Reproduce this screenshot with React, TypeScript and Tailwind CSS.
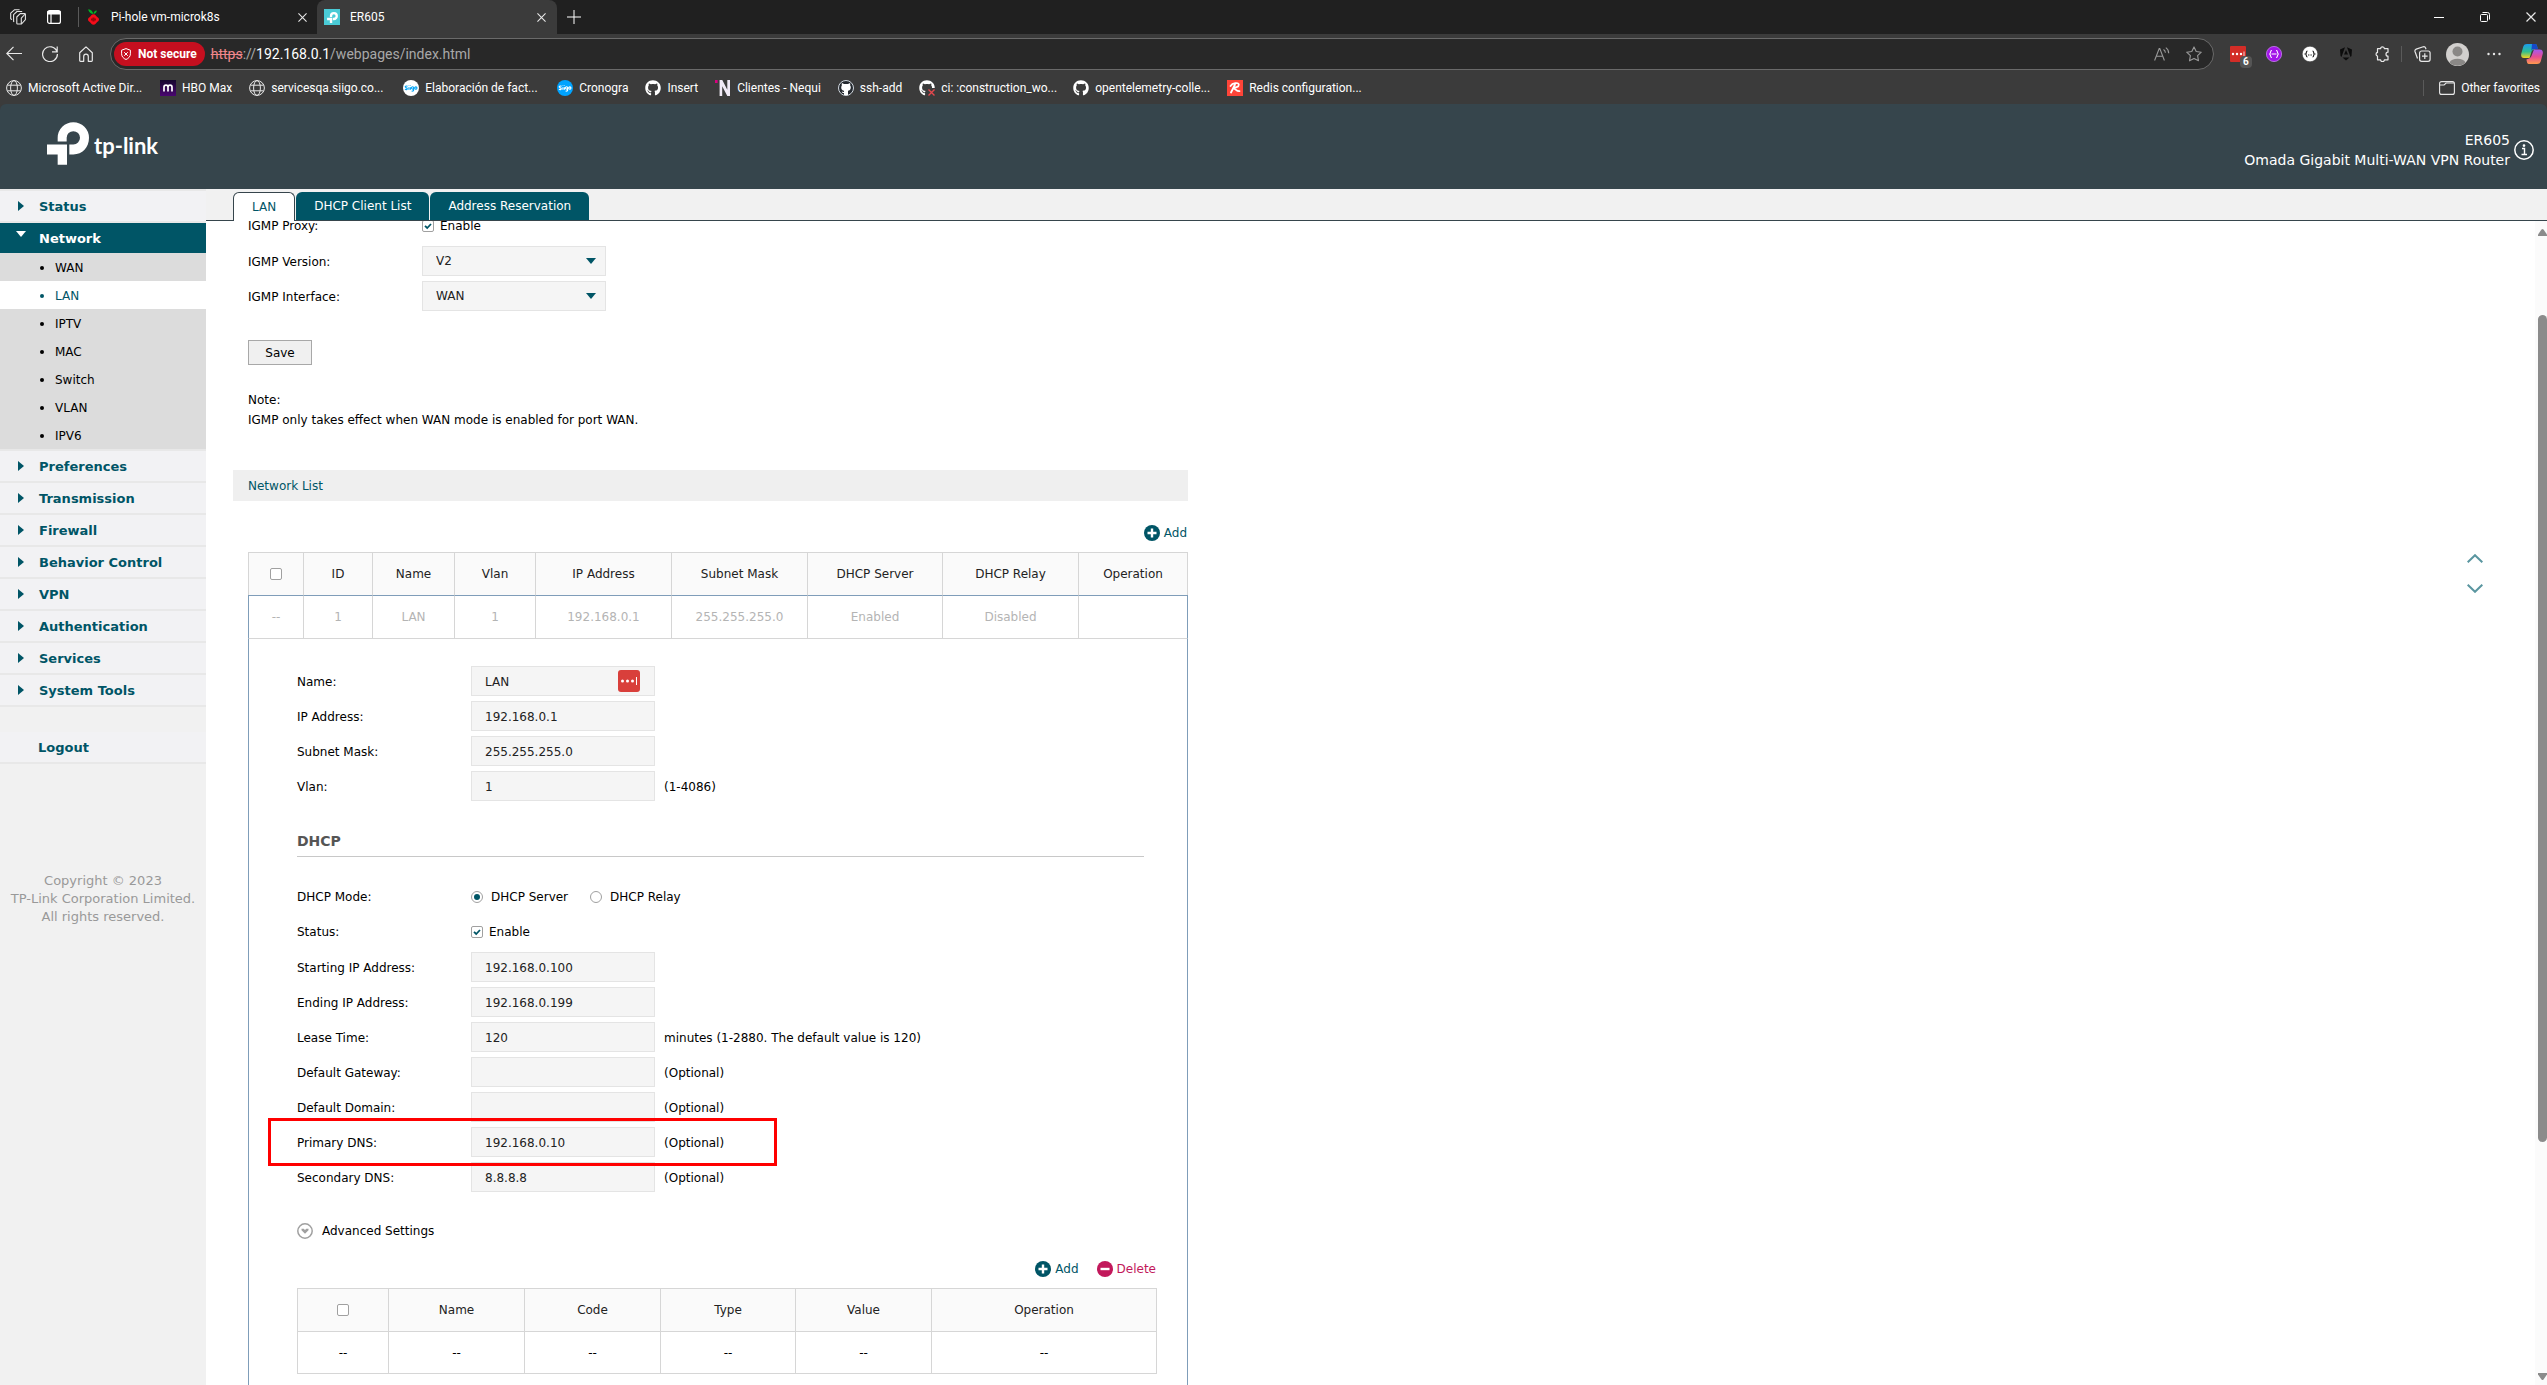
import { ReactNode } from "react";
import clsx from "clsx";
import { FaGithub } from "react-icons/fa";

const menu = ["Preferences", "Transmission", "Firewall", "Behavior Control", "VPN", "Authentication", "Services", "System Tools"];
const networkMenu = ["WAN", "LAN", "IPTV", "MAC", "Switch", "VLAN", "IPV6"];

const bookmarks: { title: string; icon: ReactNode; long?: boolean }[] = [
  { title: "Microsoft Active Dir...", icon: <GlobeIcon />, long: true },
  { title: "HBO Max", icon: <HboIcon /> },
  { title: "servicesqa.siigo.co...", icon: <GlobeIcon />, long: true },
  { title: "Elaboración de fact...", icon: <SiigoIcon bg="#fff" fg="#00a3f5" />, long: true },
  { title: "Cronogra", icon: <SiigoIcon bg="#00a3ff" fg="#fff" /> },
  { title: "Insert", icon: <FaGithub size={16} /> },
  { title: "Clientes - Nequi", icon: <NequiIcon /> },
  { title: "ssh-add", icon: <GithubRoundIcon /> },
  { title: "ci: :construction_wo...", icon: <GithubFailIcon />, long: true },
  { title: "opentelemetry-colle...", icon: <FaGithub size={16} />, long: true },
  { title: "Redis configuration...", icon: <RedisIcon />, long: true },
];

const lanFields = [
  { id: "name", label: "Name:", value: "LAN", hint: "" },
  { id: "ip", label: "IP Address:", value: "192.168.0.1", hint: "" },
  { id: "mask", label: "Subnet Mask:", value: "255.255.255.0", hint: "" },
  { id: "vlan", label: "Vlan:", value: "1", hint: "(1-4086)" },
];

const dhcpFields = [
  { id: "start", label: "Starting IP Address:", value: "192.168.0.100", hint: "" },
  { id: "end", label: "Ending IP Address:", value: "192.168.0.199", hint: "" },
  { id: "lease", label: "Lease Time:", value: "120", hint: "minutes (1-2880. The default value is 120)" },
  { id: "gateway", label: "Default Gateway:", value: "", hint: "(Optional)" },
  { id: "domain", label: "Default Domain:", value: "", hint: "(Optional)" },
  { id: "dns1", label: "Primary DNS:", value: "192.168.0.10", hint: "(Optional)" },
  { id: "dns2", label: "Secondary DNS:", value: "8.8.8.8", hint: "(Optional)" },
];

const networkColumns = ["ID", "Name", "Vlan", "IP Address", "Subnet Mask", "DHCP Server", "DHCP Relay", "Operation"];
const networkRow = ["--", "1", "LAN", "1", "192.168.0.1", "255.255.255.0", "Enabled", "Disabled", ""];
const optionColumns = ["Name", "Code", "Type", "Value", "Operation"];

function GlobeIcon() {
  return (
    <svg width="16" height="16" viewBox="0 0 16 16" fill="none" stroke="#e8e8e8">
      <circle cx="8" cy="8" r="7.4" />
      <ellipse cx="8" cy="8" rx="3.4" ry="7.4" />
      <path d="M1.4 5.2h13.2M1.4 10.8h13.2" />
    </svg>
  );
}

function HboIcon() {
  return (
    <svg width="16" height="16" viewBox="0 0 16 16">
      <defs>
        <linearGradient id="hbo" x1="0" y1="0" x2="0" y2="1">
          <stop offset="0" stopColor="#16082e" />
          <stop offset="1" stopColor="#4a0670" />
        </linearGradient>
      </defs>
      <rect width="16" height="16" fill="url(#hbo)" />
      <path d="M4 11.5V7.2a2 2 0 0 1 4 0v4.3M8 7.2a2 2 0 0 1 4 0v4.3" fill="none" stroke="#fff" strokeWidth="1.7" />
    </svg>
  );
}

function SiigoIcon({ bg, fg }: { bg: string; fg: string }) {
  return (
    <svg width="16" height="16" viewBox="0 0 16 16">
      <circle cx="8" cy="8" r="8" fill={bg} />
      <path
        d="M4.6 6.2c-1.6-.6-2.8.2-2.2 1.1.5.7 1.9.5 1.9 1.5s-1.5 1-2.4.5M5.9 7.2v2.6M7.4 7.2v2.6M10.6 8.4a1.1 1.2 0 1 0-2 0 1.1 1.2 0 0 0 2 0v1.8c0 1-1.4 1.1-2 .7M13.9 8.4a1.1 1.2 0 1 0-2.1 0 1.1 1.2 0 0 0 2.1 0M5.9 5.6v.5M7.4 5.6v.5"
        fill="none"
        stroke={fg}
        strokeWidth="1.1"
      />
    </svg>
  );
}

function NequiIcon() {
  return (
    <svg width="16" height="16" viewBox="0 0 16 16">
      <path d="M0 0h2.6v3H0z" fill="#da0081" />
      <path d="M4.6 16V0h2.7l5 9.8V0H15v16h-2.7L7.2 6.3V16z" fill="#f0eaf6" />
    </svg>
  );
}

function GithubRoundIcon() {
  return (
    <span className="flex size-4 items-center justify-center rounded-full border border-[#d0d7de] bg-[#24292f]">
      <svg width="14" height="14" viewBox="0 0 14 14" fill="#fff">
        <path d="M3 2l2 1h4l2-1c.4 1 .3 1.7.1 2.2.6.7.8 1.5.7 2.5C11.6 8.6 10.4 9.5 9 9.8V14H5v-2c-1.2.2-1.7-.4-2.3-1.5.9.2 1.300.8 2.300.5v-1.200C3.400 9.400 2.300 8.600 2.200 6.700c0-1 .2-1.800.7-2.500C2.700 3.500 2.600 3 3 2z" />
      </svg>
    </span>
  );
}

function GithubFailIcon() {
  return (
    <span className="relative block size-4">
      <FaGithub size={16} />
      <svg className="absolute -right-px -bottom-px" width="9" height="9" viewBox="0 0 9 9">
        <rect width="9" height="9" fill="#3b3b3b" />
        <path d="M1.5 1.5l6 6M7.5 1.5l-6 6" stroke="#e5484d" strokeWidth="1.4" />
      </svg>
    </span>
  );
}

function RedisIcon() {
  return (
    <svg width="16" height="16" viewBox="0 0 16 16">
      <rect width="16" height="16" fill="#ff4438" />
      <path d="M3.5 6c2-3.2 8-4 8.3-1.4C12 7 8 8 5.5 8c3 0 3.5 3.5 7 3.2M8 4.5L4 12.5" fill="none" stroke="#fff" strokeWidth="1.8" strokeLinecap="round" />
    </svg>
  );
}

function TpMark({ width, height }: { width: number; height: number }) {
  return (
    <svg width={width} height={height} viewBox="141 366 126 128" fill="#fff">
      <path d="M173 424V413A47 47 0 0 1 267 413C267 442 247 463 220 463H208V433H220A20 20 0 0 0 240 413A20 20 0 0 0 200 413V424Z" />
      <path d="M141 433H201V494H173V463H141Z" />
    </svg>
  );
}

function CloseIcon({ size = 9 }: { size?: number }) {
  return (
    <svg width={size} height={size} viewBox="0 0 10 10" stroke="#e8e8e8" strokeWidth="1.2">
      <path d="M.5.5l9 9M9.5.5l-9 9" />
    </svg>
  );
}

function TitleBar() {
  return (
    <div className="flex h-[34px] items-center bg-[#202020] text-white">
      <button className="ml-[10px]" aria-label="Workspaces">
        <svg width="16" height="16" viewBox="0 0 16 16" fill="none" stroke="#e4e4e4" strokeWidth="1.1" strokeLinejoin="round">
          <path d="M6.8 8l3.400-3.400h4.400a.8.8 0 0 1 .8.8v5.200L11.500 15H7.600a.8.8 0 0 1-.8-.8z" />
          <path d="M11.300 15V9.200l3.900-4.200M4.200 12.800l-.6-.4V5.600L7 2.500h5.200M2 10.600l-1.300-.8V4.200L4.400.8h5.200" />
        </svg>
      </button>
      <button className="ml-[21px]" aria-label="Tab actions">
        <svg width="14" height="14" viewBox="0 0 14 14" fill="none" stroke="#fff" strokeWidth="1.2">
          <rect x=".6" y=".6" width="12.8" height="12.8" rx="2" />
          <path d="M1 1.500h12v2.500H1z" fill="#fff" />
          <path d="M4 4v9" />
        </svg>
      </button>
      <span className="ml-[17px] h-5 w-px bg-[#5a5a5a]" />
      <div className="flex h-full w-[238px] items-center pr-[10px] pl-[9px]">
        <svg width="11" height="16" viewBox="0 0 11 16">
          <path d="M5.3 5C5 2.500 3 .3.3.2c0 2 2 4.500 5 4.800zM5.600 5c0-2 1.200-3.400 3.200-3.500C8.700 3.300 7.500 4.800 5.600 5z" fill="#00b526" />
          <path d="M5.5 5.200c1.800 0 2.200 1.300 3.200 2.300s2.300 1.400 2.300 3-1.300 2-2.300 3-1.400 2.300-3.200 2.300-2.200-1.300-3.200-2.300S0 12.100 0 10.500s1.300-2 2.300-3 1.400-2.300 3.200-2.300z" fill="#f60d1a" />
          <path d="M3 10.500l5 0M5.500 8.500v4" stroke="#96060c" strokeWidth="2" />
        </svg>
        <span className="ml-3 flex-1 text-xs">Pi-hole vm-microk8s</span>
        <button aria-label="Close tab"><CloseIcon /></button>
      </div>
      <div className="flex h-full w-[240px] items-center rounded-t-lg bg-[#3b3b3b] pr-[11px] pl-[7px]">
        <span className="flex size-4 items-center justify-center bg-[#4acbd6]">
          <TpMark width={11} height={11} />
        </span>
        <span className="ml-[10px] flex-1 text-xs">ER605</span>
        <button aria-label="Close tab"><CloseIcon /></button>
      </div>
      <button className="ml-[10px]" aria-label="New tab">
        <svg width="14" height="14" viewBox="0 0 14 14" stroke="#fff"><path d="M7 0v14M0 7h14" /></svg>
      </button>
      <div className="ml-auto flex items-center gap-9 pr-[11px]">
        <button className="flex size-[10px] items-center" aria-label="Minimize">
          <span className="h-px w-full bg-white" />
        </button>
        <button aria-label="Restore">
          <svg width="10" height="10" viewBox="0 0 10 10" fill="none" stroke="#fff">
            <rect x=".5" y="2.5" width="7" height="7" rx="1" />
            <path d="M2.500.5h5a2 2 0 0 1 2 2v5" />
          </svg>
        </button>
        <button aria-label="Close window"><CloseIcon size={10} /></button>
      </div>
    </div>
  );
}

function Toolbar() {
  return (
    <div className="flex h-10 items-center bg-[#3b3b3b] text-white">
      <button className="ml-[6px]" aria-label="Back">
        <svg width="16" height="16" viewBox="0 0 16 16" fill="none" stroke="#e8e8e8" strokeWidth="1.2">
          <path d="M16 7.500H.8M7.500.8L.8 7.500l6.700 6.700" />
        </svg>
      </button>
      <button className="ml-5" aria-label="Refresh">
        <svg width="16" height="16" viewBox="0 0 16 16" fill="none" stroke="#e8e8e8" strokeWidth="1.2">
          <path d="M14.900 5.500A7.400 7.400 0 1 0 15.400 8M15.200.5v5.300H10" />
        </svg>
      </button>
      <button className="ml-[21px]" aria-label="Home">
        <svg width="14" height="16" viewBox="0 0 14 16" fill="none" stroke="#e8e8e8" strokeWidth="1.2" strokeLinejoin="round">
          <path d="M.7 6.800L7 .9l6.300 5.900v7.700a.8.8 0 0 1-.8.8H9.300v-4.800a2.300 2.300 0 0 0-4.600 0v4.800H1.500a.8.8 0 0 1-.8-.8z" />
        </svg>
      </button>
      <div className="ml-[17px] flex h-8 flex-1 items-center rounded-full border border-[#6a6a6a] bg-[#282828] pr-[11px] pl-[3px]">
        <button className="flex h-6 items-center gap-[7px] rounded-full bg-[#c50f1f] pr-2 pl-[7px] text-xs font-bold">
          <svg width="10" height="12" viewBox="0 0 10 12" fill="none" stroke="#fff">
            <path d="M5 .6l4.400 1.600v3.600c0 2.800-1.900 4.700-4.400 5.700C2.500 10.500.6 8.600.6 5.800V2.200zM3.200 4.200l3.600 3.600M6.800 4.200L3.200 7.800" />
          </svg>
          Not secure
        </button>
        <span className="ml-[6px] flex-1 text-sm text-[#a8a8a8]">
          <span className="text-[#f0868c] line-through">https</span>://<span className="text-white">192.168.0.1</span>/webpages/index.html
        </span>
        <button aria-label="Read aloud">
          <svg width="16" height="14" viewBox="0 0 16 14" fill="none" stroke="#9a9a9a" strokeWidth="1.1">
            <path d="M.6 13.500L5.200 1.500h.6l4.600 12M2.200 9.300h6.600M9.500 2.500c1.200.7 1.800 1.700 1.900 3.200M11.800.6c1.900 1.200 2.900 3.200 2.900 5.600" />
          </svg>
        </button>
        <button className="ml-4" aria-label="Add to favorites">
          <svg width="16" height="16" viewBox="0 0 16 16" fill="none" stroke="#9a9a9a" strokeWidth="1.1" strokeLinejoin="round">
            <path d="M8 .9l2.200 4.600 5.100.7-3.700 3.500.9 5.100L8 12.400l-4.500 2.400.9-5.100L.7 6.200l5.100-.7z" />
          </svg>
        </button>
      </div>
      <div className="ml-4 flex items-center gap-5">
        <button className="relative block size-4" aria-label="Password manager">
          <svg width="16" height="16" viewBox="0 0 16 16">
            <rect width="16" height="16" rx="1" fill="#d32d27" />
            <circle cx="3" cy="8" r="1.2" fill="#fff" />
            <circle cx="7" cy="8" r="1.2" fill="#fff" />
            <circle cx="11" cy="8" r="1.2" fill="#fff" />
            <path d="M14 5.500v5" stroke="#fff" strokeWidth=".8" />
          </svg>
          <span className="absolute top-[10px] left-[10px] rounded-sm bg-[#555] px-[3px] text-[10px] leading-3 font-bold">6</span>
        </button>
        <button aria-label="Extension">
          <svg width="16" height="16" viewBox="0 0 16 16">
            <circle cx="8" cy="8" r="7.6" fill="#a315e8" stroke="#c77df2" strokeWidth=".8" />
            <path d="M6 4.500c-2.500 0-.6 3-2.600 3.500 2 .5.1 3.500 2.600 3.500M10 4.500c2.500 0 .6 3 2.600 3.500-2 .5-.1 3.500-2.600 3.500M5.500 8h5" fill="none" stroke="#fff" strokeWidth="1.1" />
          </svg>
        </button>
        <button aria-label="Extension">
          <svg width="16" height="16" viewBox="0 0 16 16">
            <circle cx="8" cy="8" r="7.8" fill="#fff" stroke="#222" strokeWidth=".5" />
            <path d="M5.500 5c-2 0-.4 2.500-2 3 1.600.5 0 3 2 3M10.500 5c2 0 .4 2.500 2 3-1.600.5 0 3-2 3" fill="none" stroke="#222" strokeWidth="1.2" />
            <path d="M6 9h4" stroke="#222" strokeDasharray="1 .6" />
          </svg>
        </button>
        <button aria-label="Extension">
          <svg width="16" height="14" viewBox="0 0 16 14" fill="#0c0c0c">
            <path d="M2 2.500L7 .3 3.500 10 2.500 9zM14 2.500L9 .3 12.500 10l1-1zM8 3l2 4.500H6zM4.500 10.500h7L8 13.500z" />
          </svg>
        </button>
        <button aria-label="Extensions">
          <svg width="16" height="16" viewBox="0 0 16 16" fill="none" stroke="#e8e8e8" strokeWidth="1.2" strokeLinejoin="round">
            <path d="M3.500 2.700h3.100a1.900 1.900 0 0 1 3.800 0H14v3.500a2 2 0 0 0 0 4v3.600h-3.600a1.900 1.900 0 0 1-3.800 0H3.500v-3.700a1.900 1.900 0 0 1 0-3.700z" />
          </svg>
        </button>
      </div>
      <span className="ml-[11px] h-4 w-px bg-[#5a5a5a]" />
      <button className="ml-3" aria-label="Collections">
        <svg width="17" height="16" viewBox="0 0 17 16" fill="none" stroke="#e8e8e8" strokeWidth="1.2">
          <rect x="5.6" y="5" width="10.5" height="10.3" rx="2" />
          <path d="M10.800 7.300v5.600M8 10.100h5.600M3.500 12.500L1 5.500a2 2 0 0 1 1.200-2.400l7-2.300a2 2 0 0 1 2.400 1.200l.4 1.200" />
        </svg>
      </button>
      <button className="ml-[15px]" aria-label="Profile">
        <svg width="23" height="23" viewBox="0 0 23 23">
          <circle cx="11.5" cy="11.5" r="11.5" fill="#d2d0ce" />
          <circle cx="11.5" cy="8.5" r="5" fill="#8a8886" />
          <path d="M3.500 19.500a8.500 5.500 0 0 1 16 0 11.500 11.500 0 0 1-16 0z" fill="#8a8886" />
        </svg>
      </button>
      <button className="ml-[18px]" aria-label="Settings and more">
        <svg width="14" height="4" viewBox="0 0 14 4" fill="#e8e8e8">
          <circle cx="1.5" cy="2" r="1.2" /><circle cx="7" cy="2" r="1.2" /><circle cx="12.5" cy="2" r="1.2" />
        </svg>
      </button>
      <button className="mr-1 ml-5" aria-label="Copilot">
        <svg width="22" height="20" viewBox="0 0 22 20">
          <defs>
            <linearGradient id="cop1" x1="0" y1="0" x2="0" y2="1">
              <stop offset="0" stopColor="#1b9bf0" />
              <stop offset=".55" stopColor="#2fbf8f" />
              <stop offset="1" stopColor="#f5d422" />
            </linearGradient>
            <linearGradient id="cop2" x1="0" y1="0" x2="0" y2="1">
              <stop offset="0" stopColor="#a45af0" />
              <stop offset=".5" stopColor="#e84c93" />
              <stop offset="1" stopColor="#ff9a4d" />
            </linearGradient>
          </defs>
          <path d="M6 0h8c2 0 2 2 2.600 4.500L13 5.500c-2 .5-2.500 2-3 4L8.500 14H3C.5 14-.3 12 .3 9.500l2-7C2.900.8 4 0 6 0z" fill="url(#cop1)" />
          <path d="M11 0h3c2 0 2.200 2.500 3 5h-4c-1.500 0-2.200.7-2.700 2z" fill="#1649c9" />
          <path d="M16 20H8c-2 0-2-2-2.600-4.500L8 14.500c1.500-.5 2.300-2 3-4L13 5.500h5.500c3 0 3.800 2 3.200 4.500l-2 7.500c-.6 1.700-1.700 2.500-3.700 2.500z" fill="url(#cop2)" />
        </svg>
      </button>
    </div>
  );
}

function BookmarksBar() {
  return (
    <div className="flex h-[30px] items-center bg-[#3b3b3b] pb-[2px] pl-[6px] text-xs text-white">
      {bookmarks.map((b) => (
        <a key={b.title} href="#" className={clsx("flex shrink-0 items-center gap-[6px]", b.long ? "w-[154px]" : "pr-[17px]")}>
          {b.icon}
          <span className="whitespace-nowrap">{b.title}</span>
        </a>
      ))}
      <span className="ml-auto h-4 w-px bg-[#5a5a5a]" />
      <a href="#" className="mr-[7px] ml-[15px] flex items-center gap-[6px]">
        <svg width="16" height="14" viewBox="0 0 16 14" fill="none" stroke="#e8e8e8" strokeWidth="1.1">
          <rect x=".6" y=".6" width="14.8" height="12.8" rx="2" />
          <path d="M.6 4h4.500l2-2H15" />
        </svg>
        Other favorites
      </a>
    </div>
  );
}

function Header() {
  return (
    <header className="flex h-[85px] shrink-0 items-center justify-between rounded-t-md bg-[#36454c] pr-[13px] pl-[47px] text-white">
      <div className="flex items-center gap-[5px] pb-[6px]">
        <TpMark width={42} height={43} />
        <span className="pt-1 font-['Lato',sans-serif] text-[22px] font-bold">tp-link</span>
      </div>
      <div className="flex items-center gap-1 pt-[7px]">
        <p className="text-right text-sm leading-5">
          ER605
          <br />
          Omada Gigabit Multi-WAN VPN Router
        </p>
        <button aria-label="Device information">
          <svg width="20" height="20" viewBox="0 0 20 20" fill="none" stroke="#fff" strokeWidth="1.5">
            <circle cx="10" cy="10" r="9.2" />
            <path d="M8 8.500h2.500v6M7.500 14.500h5.500" strokeWidth="1.4" />
            <circle cx="10" cy="5.6" r=".6" fill="#fff" />
          </svg>
        </button>
      </div>
    </header>
  );
}

function MenuItem({ title }: { title: string }) {
  return (
    <a href="#" className="flex h-8 items-center border-t-2 border-[#e8e8e8] bg-[#f2f2f4] text-[#005566]">
      <svg className="mr-[15px] ml-[18px]" width="6" height="10" viewBox="0 0 6 10" fill="#005566">
        <path d="M0 0l6 5-6 5z" />
      </svg>
      <span className="pt-0.5">{title}</span>
    </a>
  );
}

function Sidebar() {
  return (
    <nav className="w-[206px] shrink-0 bg-[#f1f1f1] text-[13px] font-bold">
      <MenuItem title="Status" />
      <a href="#" className="flex h-8 items-center border-t-2 border-[#e8e8e8] bg-[#005566] text-white">
        <svg className="mr-[13px] mb-2 ml-4" width="10" height="6" viewBox="0 0 10 6" fill="#fff"><path d="M0 0h10L5 6z" /></svg>
        <span className="pt-0.5">Network</span>
      </a>
      <ul className="bg-[#dcdcdc] text-xs font-normal">
        {networkMenu.map((item) => (
          <li key={item}>
            <a href="#" className={clsx("flex h-7 items-center gap-[11px] pt-0.5 pl-10", item === "LAN" ? "bg-white text-[#005566]" : "text-black")}>
              <span className="size-1 rounded-full bg-current" />
              {item}
            </a>
          </li>
        ))}
      </ul>
      {menu.map((item) => (
        <MenuItem key={item} title={item} />
      ))}
      <div className="h-[27px] border-t-2 border-[#e8e8e8]" />
      <a href="#" className="flex h-8 items-center border-b-2 border-[#e8e8e8] bg-[#f2f2f4] pt-0.5 pl-[38px] text-[#005566]">Logout</a>
      <p className="mt-[108px] text-center text-[13px] leading-[18px] font-normal text-[#999]">
        Copyright © 2023
        <br />
        TP-Link Corporation Limited.
        <br />
        All rights reserved.
      </p>
    </nav>
  );
}

function Tabs() {
  return (
    <div role="tablist" className="flex h-8 shrink-0 items-end gap-px border-b border-[#36454c] bg-[#f1f1f1] pl-[27px] text-xs">
      <button role="tab" aria-selected className="-mb-px h-[29px] rounded-t-md border border-b-0 border-[#36454c] bg-white px-[18px] text-[#005566]">LAN</button>
      <button role="tab" className="h-7 rounded-t-md bg-[#005566] px-[18px] text-white">DHCP Client List</button>
      <button role="tab" className="h-7 rounded-t-md bg-[#005566] px-[18px] text-white">Address Reservation</button>
    </div>
  );
}

function Checkbox({ id, checked = false, label }: { id: string; checked?: boolean; label?: string }) {
  return (
    <span className="relative inline-flex size-3">
      <input
        id={id}
        type="checkbox"
        defaultChecked={checked}
        aria-label={label}
        className="peer size-3 appearance-none rounded-xs border border-[#a0a0a0] bg-white"
      />
      <svg className="pointer-events-none absolute inset-0 hidden peer-checked:block" width="12" height="12" viewBox="0 0 12 12">
        <path d="M3 5.800l2.200 2.200L9 4" fill="none" stroke="#005566" strokeWidth="1.8" />
      </svg>
    </span>
  );
}

function Radio({ id, label, checked = false }: { id: string; label: string; checked?: boolean }) {
  return (
    <div className="flex items-center gap-2">
      <input
        id={id}
        name="mode"
        type="radio"
        defaultChecked={checked}
        className="size-3 appearance-none rounded-full border border-[#a0a0a0] bg-white checked:bg-[#005566] checked:bg-clip-content checked:p-[2px]"
      />
      <label htmlFor={id}>{label}</label>
    </div>
  );
}

function SelectRow({ id, label, value }: { id: string; label: string; value: string }) {
  return (
    <div className="flex h-[30px] items-center">
      <label htmlFor={id} className="w-[174px] pt-0.5">{label}</label>
      <div className="relative w-[184px]">
        <select id={id} defaultValue={value} className="h-[30px] w-full appearance-none border border-[#e4e4e4] bg-[#f5f5f5] px-[13px] text-[#222]">
          <option>{value}</option>
        </select>
        <svg className="pointer-events-none absolute top-3 right-[10px]" width="10" height="6" viewBox="0 0 10 6" fill="#005566">
          <path d="M0 0h10L5 6z" />
        </svg>
      </div>
    </div>
  );
}

function Field({ id, label, value, hint }: { id: string; label: string; value: string; hint: string }) {
  return (
    <div className="relative flex h-[30px] items-center">
      <label htmlFor={id} className="w-[174px] pt-0.5">{label}</label>
      <div className="relative">
        <input id={id} defaultValue={value} className="block h-[30px] w-[184px] border border-[#e4e4e4] bg-[#f5f5f5] px-[13px] pt-0.5 text-[#222]" />
        {id === "name" && (
          <svg className="absolute top-1 right-[15px]" width="22" height="22" viewBox="0 0 22 22">
            <rect width="22" height="22" rx="3" fill="#d93f3b" />
            <circle cx="4.5" cy="11" r="1.5" fill="#fff" />
            <circle cx="9.5" cy="11" r="1.5" fill="#fff" />
            <circle cx="14.5" cy="11" r="1.5" fill="#fff" />
            <path d="M18.500 7v8" stroke="#fff" />
          </svg>
        )}
      </div>
      {hint && <span className="ml-[9px] pt-0.5">{hint}</span>}
      {id === "dns1" && <div className="pointer-events-none absolute -top-[9px] -left-[29px] z-10 h-12 w-[509px] border-3 border-[#ff0000]" />}
    </div>
  );
}

function ActionButton({ type }: { type: "Add" | "Delete" }) {
  return (
    <button className={clsx("flex h-5 items-center gap-1", type === "Add" ? "text-[#005566]" : "text-[#c2185b]")}>
      <svg width="16" height="16" viewBox="0 0 16 16">
        <circle cx="8" cy="8" r="8" fill="currentColor" />
        <path d={type === "Add" ? "M8 3.5v9M3.5 8h9" : "M3.5 8h9"} stroke="#fff" strokeWidth="2.4" />
      </svg>
      {type}
    </button>
  );
}

function OptionsTable() {
  return (
    <table className="mt-[9px] w-[860px] table-fixed border-separate border-spacing-0 border-r border-b border-[#d6d6d6] text-center">
      <colgroup>
        <col className="w-[91px]" />
        <col className="w-[136px]" />
        <col className="w-[136px]" />
        <col className="w-[135px]" />
        <col className="w-[136px]" />
        <col />
      </colgroup>
      <thead>
        <tr className="h-[43px] bg-[#fafafa] text-[#222]">
          <th className="border-t border-l border-[#d6d6d6] align-middle"><div className="flex justify-center"><Checkbox id="all-options" label="Select all options" /></div></th>
          {optionColumns.map((c) => (
            <th key={c} className="border-t border-l border-[#d6d6d6] font-normal">{c}</th>
          ))}
        </tr>
      </thead>
      <tbody>
        <tr className="h-[42px]">
          {["check", ...optionColumns].map((c) => (
            <td key={c} className="border-t border-l border-[#d6d6d6]">--</td>
          ))}
        </tr>
      </tbody>
    </table>
  );
}

function NetworkEditor() {
  return (
    <div className="px-12 pt-[27px] pb-16">
      <div className="flex flex-col gap-[5px]">
        {lanFields.map((f) => (
          <Field key={f.id} {...f} />
        ))}
      </div>
      <h3 className="mt-[30px] w-[847px] border-b border-[#c8c8c8] pb-[5px] text-sm leading-5 font-bold text-[#555]">DHCP</h3>
      <div className="mt-[25px] flex flex-col gap-[5px]">
        <div className="flex h-[30px] items-center">
          <span className="w-[174px]">DHCP Mode:</span>
          <div className="flex gap-[22px]">
            <Radio id="mode-server" label="DHCP Server" checked />
            <Radio id="mode-relay" label="DHCP Relay" />
          </div>
        </div>
        <div className="flex h-[30px] items-center">
          <span className="w-[174px]">Status:</span>
          <Checkbox id="status" checked />
          <label htmlFor="status" className="ml-[6px]">Enable</label>
        </div>
        {dhcpFields.map((f) => (
          <Field key={f.id} {...f} />
        ))}
      </div>
      <button className="mt-[29px] flex h-5 items-center gap-[9px]">
        <svg width="16" height="16" viewBox="0 0 16 16" fill="none" stroke="#a0a0a0" strokeWidth="1.5">
          <circle cx="8" cy="8" r="7.2" />
          <path d="M4.500 5.800h2.200L8 7l1.300-1.200h2.200v1.400L8 10.800 4.500 7.200z" fill="#a0a0a0" stroke="none" />
        </svg>
        Advanced Settings
      </button>
      <div className="mt-[18px] flex w-[860px] justify-end gap-[18px] pr-px">
        <ActionButton type="Add" />
        <ActionButton type="Delete" />
      </div>
      <OptionsTable />
    </div>
  );
}

function NetworkTable() {
  return (
    <table className="mt-[9px] w-[940px] table-fixed border-separate border-spacing-0 text-center">
      <colgroup>
        <col className="w-[55px]" />
        <col className="w-[69px]" />
        <col className="w-[82px]" />
        <col className="w-[81px]" />
        <col className="w-[136px]" />
        <col className="w-[136px]" />
        <col className="w-[135px]" />
        <col className="w-[136px]" />
        <col />
      </colgroup>
      <thead>
        <tr className="h-[43px] bg-[#fafafa] text-[#222]">
          <th className="border-t border-l border-[#d6d6d6] align-middle"><div className="flex justify-center"><Checkbox id="all-networks" label="Select all networks" /></div></th>
          {networkColumns.map((c) => (
            <th key={c} className="border-t border-l border-[#d6d6d6] font-normal last:border-r">{c}</th>
          ))}
        </tr>
      </thead>
      <tbody>
        <tr className="h-[43px] text-[#b4b4b4]">
          {networkRow.map((cell, i) => (
            <td
              key={i}
              className="border-t border-l border-t-[#7f9db9] border-l-[#d6d6d6] first:border-l-[#7f9db9] last:border-r last:border-r-[#7f9db9]"
            >
              {cell}
            </td>
          ))}
        </tr>
        <tr>
          <td colSpan={9} className="border-x border-t border-x-[#7f9db9] border-t-[#d6d6d6] p-0 text-left">
            <NetworkEditor />
          </td>
        </tr>
      </tbody>
    </table>
  );
}

function LanPage() {
  return (
    <main className="-mt-[10px] flex-1 pl-[42px] text-xs text-black">
      <div className="flex flex-col gap-[5px]">
        <div className="flex h-[30px] items-center">
          <span className="w-[174px]">IGMP Proxy:</span>
          <Checkbox id="igmp" checked />
          <label htmlFor="igmp" className="ml-[6px]">Enable</label>
        </div>
        <SelectRow id="igmp-version" label="IGMP Version:" value="V2" />
        <SelectRow id="igmp-interface" label="IGMP Interface:" value="WAN" />
      </div>
      <button className="mt-[29px] h-[25px] w-16 border border-[#a8a8a8] bg-[#f0f0f0]">Save</button>
      <p className="mt-[25px] leading-5">
        Note:
        <br />
        IGMP only takes effect when WAN mode is enabled for port WAN.
      </p>
      <h2 className="mt-10 -ml-[15px] flex h-[31px] w-[955px] items-center bg-[#efefef] pl-[15px] text-[#005566]">Network List</h2>
      <div className="mt-[22px] flex w-[940px] justify-end pr-px">
        <ActionButton type="Add" />
      </div>
      <NetworkTable />
    </main>
  );
}

function Scrollbar() {
  return (
    <div className="flex w-3 shrink-0 flex-col items-end bg-[#fbfbfb] pt-2 pb-[5px]">
      <svg width="9" height="7" viewBox="0 0 9 7" fill="#8b8b8b"><path d="M3.500.5Q4.500-.5 5.500.5L9 5.500V7H0V5.500z" /></svg>
      <div className="mt-[79px] w-[9px] grow-[827] basis-0 rounded-full bg-[#8b8b8b]" />
      <div className="grow-[231] basis-0" />
      <svg width="9" height="7" viewBox="0 0 9 7" fill="#8b8b8b"><path d="M3.500 6.500Q4.500 7.500 5.500 6.500L9 1.500V0H0v1.500z" /></svg>
    </div>
  );
}

export default function App() {
  return (
    <div className="flex h-screen flex-col overflow-hidden bg-[#3b3b3b] font-['DejaVu_Sans',sans-serif]">
      <div className="shrink-0 font-['Roboto',sans-serif]">
        <TitleBar />
        <Toolbar />
        <BookmarksBar />
      </div>
      <Header />
      <div className="flex min-h-0 flex-1 bg-white">
        <Sidebar />
        <div className="flex min-w-0 flex-1 flex-col">
          <Tabs />
          <div className="flex min-h-0 flex-1 overflow-hidden">
            <LanPage />
            <div className="mt-[333px] mr-[52px] flex flex-col gap-[21px] self-start">
              <button aria-label="Scroll up">
                <svg width="16" height="9" viewBox="0 0 16 9" fill="none" stroke="#5a96a0" strokeWidth="2"><path d="M.7 8.300L8 1.200l7.300 7.100" /></svg>
              </button>
              <button aria-label="Scroll down">
                <svg width="16" height="9" viewBox="0 0 16 9" fill="none" stroke="#5a96a0" strokeWidth="2"><path d="M.7.7L8 7.800 15.300.7" /></svg>
              </button>
            </div>
            <Scrollbar />
          </div>
        </div>
      </div>
    </div>
  );
}
